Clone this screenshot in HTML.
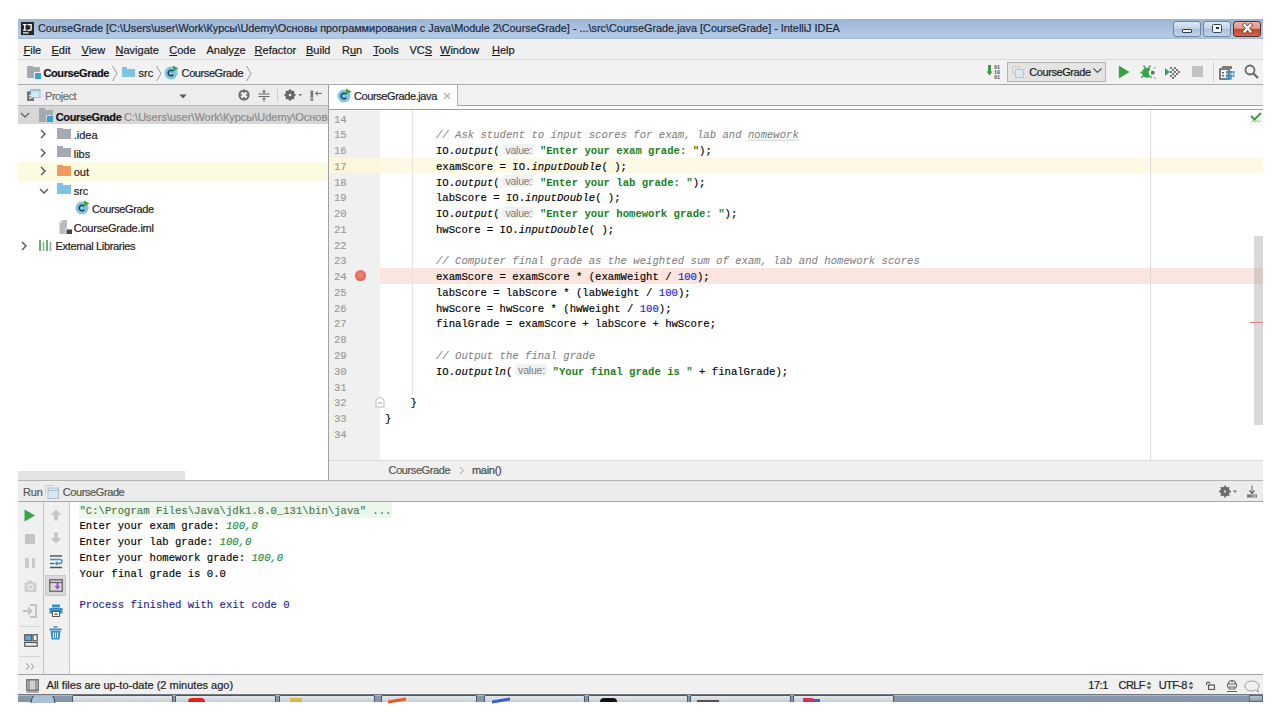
<!DOCTYPE html>
<html><head><meta charset="utf-8">
<style>
*{margin:0;padding:0;box-sizing:border-box}
html,body{width:1280px;height:720px;background:#fff;overflow:hidden;position:relative}
body{font-family:"Liberation Sans",sans-serif;font-size:11px;color:#1e1e1e}
.a{position:absolute}
.t{position:absolute;white-space:nowrap;line-height:11px;font-size:11px;-webkit-text-stroke:0.2px currentColor}
.mi{position:absolute;top:45px;white-space:nowrap;line-height:11px;font-size:11px;color:#1a1a1a;-webkit-text-stroke:0.2px currentColor}
.mi u{text-decoration:underline;text-underline-offset:1px}
.code{position:absolute;font-family:"Liberation Mono",monospace;font-size:10.625px;line-height:15.76px;white-space:pre;color:#000;-webkit-text-stroke:0.15px currentColor}
.cm{color:#808080;font-style:italic;-webkit-text-stroke:0.05px currentColor}
.st{color:#1a7f1a;font-weight:bold;-webkit-text-stroke:0}
.nu{color:#2323d6}
.it{font-style:italic}
.hint{display:inline-block;position:relative;width:40.25px;height:14px;vertical-align:top}
.hint i{position:absolute;left:2.25px;top:-0.5px;width:32.5px;height:11.7px;background:#f1f1f1;border-radius:3px;font-family:"Liberation Sans",sans-serif;font-style:normal;font-size:10.5px;color:#7b7b7b;line-height:13px;padding-left:3.5px;letter-spacing:-0.2px;-webkit-text-stroke:0}
.chev{position:absolute;width:6px;height:6px;border-right:1.5px solid #555;border-bottom:1.5px solid #555}
.fold{position:absolute;width:14px;height:10px}
.fold:before{content:"";position:absolute;left:0;top:-2px;width:6px;height:3px;border-radius:1px 1px 0 0;background:inherit}
</style></head><body>
<!-- ===== title bar ===== -->
<div class="a" style="left:18px;top:19px;width:1245px;height:20px;background:linear-gradient(#9eb0c5 0px,#9db7d7 1px,#9db7d7 2px,#b5cce7 18px,#a8bcd3 19px,#a8bcd3 20px)"></div><div class="a" style="left:18px;top:39px;width:1245px;height:1px;background:#eef3f9;z-index:1"></div>
<svg class="a" style="left:21px;top:22px" width="13" height="13"><rect width="13" height="13" fill="#262626"/><path d="M2 2 H5.5 V3.2 H4.4 V7.6 H5.5 V8.8 H2 V7.6 H3.1 V3.2 H2Z" fill="#fff"/><path d="M6.5 2 H10.8 V7 C10.8 8.5 10 9 8.5 9 H6.5 V7.7 H8.4 C9.2 7.7 9.4 7.4 9.4 6.8 V3.2 H6.5Z" fill="#fff"/><rect x="2" y="10.3" width="5.5" height="1.2" fill="#fff"/></svg>
<div class="t" style="left:38px;top:23.3px;font-size:10.85px;color:#1b2838">CourseGrade [C:\Users\user\Work\Курсы\Udemy\Основы программирования с Java\Module 2\CourseGrade] - ...\src\CourseGrade.java [CourseGrade] - IntelliJ IDEA</div>
<div class="a" style="left:1173px;top:21px;width:28px;height:16px;border:1px solid #6b84a2;border-radius:3px;background:linear-gradient(#dfe9f5 0%,#c3d4e8 45%,#a9bfd9 50%,#c5d6ea 100%)"></div>
<div class="a" style="left:1182px;top:29px;width:10px;height:4px;border:1px solid #2d3c50;background:#fff;border-radius:1px"></div>
<div class="a" style="left:1203px;top:21px;width:28px;height:16px;border:1px solid #6b84a2;border-radius:3px;background:linear-gradient(#dfe9f5 0%,#c3d4e8 45%,#a9bfd9 50%,#c5d6ea 100%)"></div>
<div class="a" style="left:1212px;top:24px;width:10px;height:8.5px;border:1.5px solid #3a4656;background:#f4f4f4;border-radius:1.5px"></div><div class="a" style="left:1215.5px;top:27px;width:3px;height:2px;background:#333"></div>
<div class="a" style="left:1233px;top:21px;width:28px;height:16px;border:1px solid #4e3430;border-radius:3px;background:linear-gradient(#eeb0a4 0%,#e39a88 45%,#c9452e 52%,#d2664c 100%)"></div>
<svg class="a" style="left:1241px;top:23px" width="13" height="11"><path d="M3.5 2 L9.5 8.5 M9.5 2 L3.5 8.5" stroke="#6a3a32" stroke-width="3.8" stroke-linecap="square"/><path d="M3.5 2 L9.5 8.5 M9.5 2 L3.5 8.5" stroke="#fff" stroke-width="2.3" stroke-linecap="square"/></svg>
<!-- ===== menu ===== -->
<div class="a" style="left:18px;top:39px;width:1245px;height:21px;background:#f0f0f0;border-bottom:1px solid #d9d9d9"></div>
<span class="mi" style="left:23.5px"><u>F</u>ile</span>
<span class="mi" style="left:51.5px"><u>E</u>dit</span>
<span class="mi" style="left:81.5px"><u>V</u>iew</span>
<span class="mi" style="left:115.5px"><u>N</u>avigate</span>
<span class="mi" style="left:169.3px"><u>C</u>ode</span>
<span class="mi" style="left:206.5px">Analy<u>z</u>e</span>
<span class="mi" style="left:254.6px"><u>R</u>efactor</span>
<span class="mi" style="left:306px"><u>B</u>uild</span>
<span class="mi" style="left:342px">R<u>u</u>n</span>
<span class="mi" style="left:373px"><u>T</u>ools</span>
<span class="mi" style="left:409.5px">VC<u>S</u></span>
<span class="mi" style="left:440px"><u>W</u>indow</span>
<span class="mi" style="left:492px"><u>H</u>elp</span>
<!-- ===== nav bar ===== -->
<div class="a" style="left:18px;top:60px;width:1245px;height:25px;background:#f2f2f2;border-bottom:1px solid #ababab"></div>

<!-- nav icons -->
<div class="a" style="left:27px;top:67px;width:13px;height:11px;background:#a3aab1"></div>
<div class="a" style="left:27px;top:65.5px;width:6px;height:2px;background:#a3aab1"></div>
<div class="a" style="left:34px;top:72px;width:7px;height:7px;background:#f2f2f2"></div>
<div class="a" style="left:35px;top:73px;width:6px;height:6px;background:#3aa3d6"></div>
<div class="t" style="left:43.4px;top:68.2px;font-weight:bold;letter-spacing:-0.37px;color:#111">CourseGrade</div>
<svg class="a" style="left:111px;top:65px" width="8" height="17"><path d="M1.5 1 L6 8.5 L1.5 16" fill="none" stroke="#9a9a9a" stroke-width="1"/></svg>
<div class="a" style="left:122px;top:68.5px;width:12.5px;height:8.5px;background:#7ec3e2"></div>
<div class="a" style="left:122px;top:67px;width:5px;height:2px;background:#7ec3e2"></div>
<div class="t" style="left:138.5px;top:68.2px;color:#222">src</div>
<svg class="a" style="left:155px;top:65px" width="8" height="17"><path d="M1.5 1 L6 8.5 L1.5 16" fill="none" stroke="#9a9a9a" stroke-width="1"/></svg>
<svg class="a" style="left:164px;top:65px" width="15" height="15"><circle cx="7" cy="8" r="6.5" fill="#7fc4e3"/><path d="M9.2 6.3 A2.8 2.8 0 1 0 9.2 9.7" fill="none" stroke="#1f3f5a" stroke-width="1.5"/><path d="M9 0.5 L14.5 3.5 L9 6.5Z" fill="#3fa33f"/></svg>
<div class="t" style="left:181.6px;top:68.2px;letter-spacing:-0.41px;color:#222">CourseGrade</div>
<svg class="a" style="left:245px;top:65px" width="8" height="17"><path d="M1.5 1 L6 8.5 L1.5 16" fill="none" stroke="#9a9a9a" stroke-width="1"/></svg>
<!-- right toolbar -->
<svg class="a" style="left:986px;top:64px" width="16" height="16"><path d="M3.5 1 V8" stroke="#3c9b4a" stroke-width="3"/><path d="M0.5 7.5 H6.5 L3.5 11.5Z" fill="#3c9b4a"/><text x="8" y="5" font-family="Liberation Mono" font-size="5.2" font-weight="bold" fill="#555">01</text><text x="8" y="10" font-family="Liberation Mono" font-size="5.2" font-weight="bold" fill="#555">10</text><text x="8" y="15" font-family="Liberation Mono" font-size="5.2" font-weight="bold" fill="#555">01</text></svg>
<div class="a" style="left:1007px;top:62px;width:99px;height:20px;border:1px solid #b4b4b4;background:#e4e4e4"></div>
<div class="a" style="left:1012px;top:65.5px;width:8px;height:8px;border:1px solid #c8cdd2;border-radius:1px"></div>
<div class="a" style="left:1015px;top:69px;width:9px;height:8.5px;border:1px solid #b9c6d0;background:#dbe5ee"></div>
<div class="t" style="left:1029.2px;top:66.8px;letter-spacing:-0.41px;color:#1a1a1a">CourseGrade</div>
<svg class="a" style="left:1093px;top:68px" width="9" height="6"><path d="M0.5 0.5 L4.5 4.5 L8.5 0.5" fill="none" stroke="#555" stroke-width="1.2"/></svg>
<svg class="a" style="left:1118px;top:65px" width="13" height="14"><path d="M0.8 0.5 L11.5 7 L0.8 13.5Z" fill="#36a546"/></svg>
<svg class="a" style="left:1140px;top:64px" width="17" height="16"><path d="M3.5 1.5 L5.5 4 M10.5 1.5 L8.5 4 M0.3 8.5 H2.5 M1.2 13.8 L3.5 11.8 M11.8 13.8 L9.5 11.8" stroke="#3f9f4a" stroke-width="1.4"/><circle cx="7" cy="8.7" r="5" fill="#36a546"/><circle cx="12.3" cy="8.7" r="3.6" fill="#f2f2f2"/><path d="M11 5.8 A3.2 3.2 0 0 1 11 11.6 A2.6 3.3 0 0 0 11 5.8Z" fill="#666"/><circle cx="12.8" cy="8.7" r="1.9" fill="#6b6b6b"/><path d="M14 4.5 L15.5 3 M14 13 L15.5 14.5" stroke="#777" stroke-width="1"/></svg>
<svg class="a" style="left:1164px;top:64px" width="17" height="16"><path d="M1 4 L6 8 L1 12Z" fill="#36a546"/><g fill="#777"><rect x="6" y="3" width="2" height="2"/><rect x="10" y="3" width="2" height="2"/><rect x="8" y="5" width="2" height="2"/><rect x="12" y="5" width="2" height="2"/><rect x="6" y="7" width="2" height="2"/><rect x="10" y="7" width="2" height="2"/><rect x="14" y="7" width="2" height="2"/><rect x="8" y="9" width="2" height="2"/><rect x="12" y="9" width="2" height="2"/><rect x="6" y="11" width="2" height="2"/><rect x="10" y="11" width="2" height="2"/><rect x="8" y="13" width="2" height="2"/></g></svg>
<div class="a" style="left:1192px;top:66px;width:11px;height:11px;background:#c2c2c2"></div>
<div class="a" style="left:1213px;top:62px;width:1px;height:20px;background:#d0d0d0"></div>
<svg class="a" style="left:1219px;top:64px" width="16" height="16"><path d="M3 3 H12 V5 M1 5 H10 V15 H1Z" fill="none" stroke="#555" stroke-width="1.5"/><g fill="#3d8fc6"><rect x="7" y="7" width="2.5" height="2.5"/><rect x="10.5" y="7" width="2.5" height="2.5"/><rect x="7" y="10.5" width="2.5" height="2.5"/><rect x="10.5" y="10.5" width="2.5" height="2.5"/><rect x="13.5" y="7" width="2" height="2.5"/><rect x="13.5" y="10.5" width="2" height="2.5"/><rect x="7" y="13.5" width="2.5" height="2"/><rect x="10.5" y="13.5" width="2.5" height="2"/></g><g fill="#666"><rect x="3" y="8" width="2" height="1.5"/><rect x="3" y="11" width="2" height="1.5"/></g></svg>
<svg class="a" style="left:1244px;top:64px" width="16" height="16"><circle cx="6" cy="6" r="4.5" fill="none" stroke="#666" stroke-width="1.8"/><path d="M9.5 9.5 L14 14" stroke="#666" stroke-width="2.2"/></svg>

<!-- ===== project panel ===== -->
<div class="a" style="left:18px;top:85px;width:311px;height:21px;background:#ededed;border-bottom:1px solid #b9b9b9"></div>
<svg class="a" style="left:27px;top:89px" width="14" height="13"><rect x="0" y="2.5" width="7" height="9.5" fill="#767676"/><rect x="3.5" y="0.5" width="9.5" height="8" fill="#d4e9f7" stroke="#9cc0d8" stroke-width="1"/><rect x="3.5" y="0.5" width="9.5" height="1.8" fill="#9cc0d8"/><rect x="0" y="2.5" width="3.5" height="9.5" fill="#767676"/><rect x="2" y="6" width="2.5" height="1.2" fill="#eee"/><rect x="2" y="8.5" width="2.5" height="1.2" fill="#eee"/></svg>
<div class="t" style="left:45px;top:91px;color:#6e6e6e;letter-spacing:-0.45px">Project</div>
<svg class="a" style="left:179px;top:94px" width="8" height="5"><path d="M0.5 0.5 H7.5 L4 4.5Z" fill="#555"/></svg>
<svg class="a" style="left:238px;top:89px" width="12" height="12"><circle cx="6" cy="6" r="4.6" fill="none" stroke="#6a6a6a" stroke-width="2"/><path d="M6 1.5 V4 M6 8 V10.5 M1.5 6 H4 M8 6 H10.5" stroke="#6a6a6a" stroke-width="1.4"/></svg>
<svg class="a" style="left:258px;top:89px" width="12" height="13"><path d="M0.5 5 H11.5 M0.5 7.5 H11.5" stroke="#6a6a6a" stroke-width="1.1"/><path d="M6 0.5 V3.5 M6 9 V12.5" stroke="#6a6a6a" stroke-width="1.1"/><path d="M4 2.2 L6 4.3 L8 2.2Z M4 10.3 L6 8.2 L8 10.3Z" fill="#6a6a6a"/></svg>
<div class="a" style="left:277px;top:89px;width:1px;height:13px;background:#cfcfcf"></div>
<svg class="a" style="left:284px;top:89px" width="19" height="12"><circle cx="6" cy="6" r="3.6" fill="none" stroke="#666" stroke-width="2.4"/><path d="M6 0.3 V11.7 M0.3 6 H11.7 M2 2 L10 10 M10 2 L2 10" stroke="#666" stroke-width="1.7"/><circle cx="6" cy="6" r="1.3" fill="#ededed"/><path d="M14.5 5 H18 L16.25 7.5Z" fill="#777"/></svg>
<svg class="a" style="left:310px;top:90px" width="13" height="12"><rect x="0.5" y="0.5" width="2.7" height="10.5" fill="#777"/><rect x="1" y="7" width="1.7" height="3" fill="#aaa"/><path d="M5.5 3.4 H12 M5.5 3.4 L7.8 1.4 M5.5 3.4 L7.8 5.4" stroke="#666" stroke-width="1" fill="none"/></svg>
<div class="a" style="left:18px;top:106px;width:311px;height:365px;background:#fff"></div>
<!-- selected row -->
<div class="a" style="left:18px;top:106px;width:311px;height:18.3px;background:#d7d7d7"></div>
<!-- out row highlight -->
<div class="a" style="left:18px;top:161.5px;width:311px;height:19px;background:#fbfbe2"></div>
<!-- rows -->
<svg class="a" style="left:20px;top:112px" width="10" height="7"><path d="M1 1 L5 5 L9 1" fill="none" stroke="#666" stroke-width="1.4"/></svg>
<div class="a" style="left:39px;top:109.5px;width:14px;height:12px;background:#a3aab1"></div>
<div class="a" style="left:39px;top:108px;width:6px;height:2px;background:#a3aab1"></div>
<div class="a" style="left:46px;top:115px;width:8px;height:8px;background:#d5d5d5"></div>
<div class="a" style="left:47px;top:116px;width:6px;height:6px;background:#3aa3d6"></div>
<div class="t" style="left:55.8px;top:112px;font-weight:bold;letter-spacing:-0.37px;color:#111;width:273px;overflow:hidden">CourseGrade <span style="font-weight:normal;color:#8a8a8a;letter-spacing:0px">C:\Users\user\Work\Курсы\Udemy\Основы программирования</span></div>

<svg class="a" style="left:40px;top:129px" width="7" height="10"><path d="M1 1 L5 5 L1 9" fill="none" stroke="#555" stroke-width="1.4"/></svg>
<div class="a" style="left:57px;top:129px;width:13.5px;height:9.5px;background:#a3aab1"></div>
<div class="a" style="left:57px;top:127.5px;width:5.5px;height:2px;background:#a3aab1"></div>
<div class="t" style="left:73.7px;top:130px;color:#222">.idea</div>

<svg class="a" style="left:40px;top:148px" width="7" height="10"><path d="M1 1 L5 5 L1 9" fill="none" stroke="#555" stroke-width="1.4"/></svg>
<div class="a" style="left:57px;top:147.5px;width:13.5px;height:9.5px;background:#a3aab1"></div>
<div class="a" style="left:57px;top:146px;width:5.5px;height:2px;background:#a3aab1"></div>
<div class="t" style="left:73.7px;top:148.5px;color:#222">libs</div>

<svg class="a" style="left:40px;top:166px" width="7" height="10"><path d="M1 1 L5 5 L1 9" fill="none" stroke="#555" stroke-width="1.4"/></svg>
<div class="a" style="left:57px;top:166px;width:13.5px;height:9.5px;background:#f39a63"></div>
<div class="a" style="left:57px;top:164.5px;width:5.5px;height:2px;background:#f39a63"></div>
<div class="t" style="left:73.7px;top:167px;color:#222">out</div>

<svg class="a" style="left:38.5px;top:188px" width="10" height="7"><path d="M1 1 L5 5 L9 1" fill="none" stroke="#555" stroke-width="1.4"/></svg>
<div class="a" style="left:57px;top:184.5px;width:13.5px;height:9.5px;background:#7ec3e2"></div>
<div class="a" style="left:57px;top:183px;width:5.5px;height:2px;background:#7ec3e2"></div>
<div class="t" style="left:73.7px;top:185.5px;color:#222">src</div>

<svg class="a" style="left:75px;top:200px" width="15" height="15"><circle cx="7" cy="8" r="6.5" fill="#7fc4e3"/><path d="M9.2 6.3 A2.8 2.8 0 1 0 9.2 9.7" fill="none" stroke="#1f3f5a" stroke-width="1.5"/><path d="M9 0.5 L14.5 3.5 L9 6.5Z" fill="#3fa33f"/></svg>
<div class="t" style="left:91.9px;top:204px;letter-spacing:-0.38px;color:#222">CourseGrade</div>

<svg class="a" style="left:58.5px;top:220px" width="14" height="14"><path d="M0.5 2 L3 0 H8 V14 H0.5Z" fill="#b8bcc0"/><path d="M3 0 V2.5 H0.5" fill="none" stroke="#eee" stroke-width="0.8"/><rect x="6.5" y="8.5" width="7" height="5.5" fill="#f5f5f5"/><rect x="7.5" y="9.5" width="5.5" height="4.5" fill="#444"/></svg>
<div class="t" style="left:73.7px;top:222.5px;letter-spacing:-0.2px;color:#222">CourseGrade.iml</div>

<svg class="a" style="left:21px;top:241px" width="7" height="10"><path d="M1 1 L5 5 L1 9" fill="none" stroke="#555" stroke-width="1.4"/></svg>
<svg class="a" style="left:38.5px;top:238.5px" width="14" height="13"><path d="M1 1 V12 M4.5 3 V12 M8 1 V12 M11.5 3 V12" stroke="#8aa" stroke-width="1.5"/><path d="M1 1 V12" stroke="#5aab5a" stroke-width="1.5"/><path d="M8 1 V12" stroke="#5aab5a" stroke-width="1.5"/></svg>
<div class="t" style="left:55.6px;top:241px;letter-spacing:-0.33px;color:#222">External Libraries</div>
<!-- project h scrollbar -->
<div class="a" style="left:18px;top:471px;width:167px;height:10px;background:#e4e4e4"></div>

<!-- ===== editor ===== -->
<div class="a" style="left:328px;top:84px;width:1px;height:397px;background:#a0a0a0"></div>
<div class="a" style="left:329px;top:85px;width:934px;height:25px;background:#f1f1f1;border-bottom:1px solid #9c9c9c"></div>
<div class="a" style="left:457px;top:105px;width:806px;height:1px;background:#a8a8a8"></div>
<div class="a" style="left:329px;top:106px;width:934px;height:3px;background:#fff"></div>
<div class="a" style="left:329px;top:85px;width:128px;height:21px;background:#fff"></div>
<div class="a" style="left:457px;top:85px;width:1px;height:21px;background:#b0b0b0"></div>
<svg class="a" style="left:336.5px;top:87.5px" width="15" height="15"><circle cx="7" cy="8" r="6.5" fill="#7fc4e3"/><path d="M9.2 6.3 A2.8 2.8 0 1 0 9.2 9.7" fill="none" stroke="#1f3f5a" stroke-width="1.5"/><path d="M9 0.5 L14.5 3.5 L9 6.5Z" fill="#3fa33f"/></svg>
<div class="t" style="left:353.9px;top:90.5px;letter-spacing:-0.39px;color:#222">CourseGrade.java</div>
<svg class="a" style="left:443px;top:92px" width="8" height="8"><path d="M1 1 L7 7 M7 1 L1 7" stroke="#b0b0b0" stroke-width="1.1"/></svg>
<div class="a" style="left:329px;top:110px;width:934px;height:349.5px;background:#fff"></div>
<!-- gutter -->
<div class="a" style="left:329px;top:110px;width:50.5px;height:349.5px;background:#f0f0f0"></div>
<!-- current line 17 -->
<div class="a" style="left:329px;top:157.5px;width:934px;height:15.76px;background:#fdf9e5"></div>
<div class="a" style="left:329px;top:157.5px;width:50.5px;height:15.76px;background:#fcf6dc"></div>
<!-- breakpoint line 24 -->
<div class="a" style="left:379.5px;top:268px;width:883.5px;height:15.76px;background:#fae5df"></div>
<div class="a" style="left:355px;top:270.2px;width:11px;height:11px;border-radius:50%;background:radial-gradient(circle at 50% 45%,#ee9080 0,#e56c58 55%,#d0503c 100%)"></div>
<!-- indent guide -->
<div class="a" style="left:412px;top:110px;width:1px;height:285px;background:#e4e4e4"></div>
<!-- right margin -->
<div class="a" style="left:1150px;top:110px;width:1px;height:349.5px;background:#dcdcdc"></div>
<!-- line numbers -->
<div class="code" style="left:334px;top:112.5px;color:#9a9a9a">14
15
16
17
18
19
20
21
22
23
24
25
26
27
28
29
30
31
32
33
34</div>
<!-- fold marker -->
<svg class="a" style="left:375px;top:396px" width="10" height="12"><path d="M1 4 L5 1 L9 4 V11 H1Z" fill="#fff" stroke="#bbb" stroke-width="1"/><path d="M3 7 H7" stroke="#999" stroke-width="1"/></svg>
<!-- code -->
<div class="code" style="left:385px;top:112.5px">
        <span class="cm">// Ask student to input scores for exam, lab and nomework</span>
        IO.<span class="it">output</span>(<span class="hint"><i>value:</i></span><span class="st">"Enter your exam grade: "</span>);
        examScore = IO.<span class="it">inputDouble</span>( );
        IO.<span class="it">output</span>(<span class="hint"><i>value:</i></span><span class="st">"Enter your lab grade: "</span>);
        labScore = IO.<span class="it">inputDouble</span>( );
        IO.<span class="it">output</span>(<span class="hint"><i>value:</i></span><span class="st">"Enter your homework grade: "</span>);
        hwScore = IO.<span class="it">inputDouble</span>( );

        <span class="cm">// Computer final grade as the weighted sum of exam, lab and homework scores</span>
        examScore = examScore * (examWeight / <span class="nu">100</span>);
        labScore = labScore * (labWeight / <span class="nu">100</span>);
        hwScore = hwScore * (hwWeight / <span class="nu">100</span>);
        finalGrade = examScore + labScore + hwScore;

        <span class="cm">// Output the final grade</span>
        IO.<span class="it">outputln</span>(<span class="hint"><i>value:</i></span><span class="st">"Your final grade is "</span> + finalGrade);

    }
}
</div>
<!-- typo underline -->
<svg class="a" style="left:748px;top:139px" width="51" height="3"><path d="M0 2 L2 0.5 L4 2 L6 0.5 L8 2 L10 0.5 L12 2 L14 0.5 L16 2 L18 0.5 L20 2 L22 0.5 L24 2 L26 0.5 L28 2 L30 0.5 L32 2 L34 0.5 L36 2 L38 0.5 L40 2 L42 0.5 L44 2 L46 0.5 L48 2 L50 0.5 L52 2" fill="none" stroke="#b8c8b8" stroke-width="0.8"/></svg>
<!-- check mark -->
<svg class="a" style="left:1250px;top:112px" width="12" height="12"><path d="M1 4 L4.5 7.5 L11 1" fill="none" stroke="#3f9b3f" stroke-width="2"/><path d="M1 10 L3 8.5 L5 10 L7 8.5 L9 10 L11 8.5" fill="none" stroke="#6ab06a" stroke-width="0.8"/></svg>
<!-- scrollbar -->
<div class="a" style="left:1254px;top:236px;width:9px;height:189px;background:rgba(160,160,160,0.4)"></div>
<div class="a" style="left:1250px;top:322px;width:13px;height:1px;background:#e08080"></div>
<!-- editor breadcrumbs -->
<div class="a" style="left:329px;top:459.5px;width:934px;height:21.5px;background:#f0f0f0;border-top:1px solid #dcdcdc"></div>
<div class="t" style="left:388.6px;top:465px;letter-spacing:-0.41px;color:#555">CourseGrade</div>
<svg class="a" style="left:459px;top:466px" width="6" height="9"><path d="M1 1 L4.5 4.5 L1 8" fill="none" stroke="#999" stroke-width="1"/></svg>
<div class="t" style="left:472px;top:465px;letter-spacing:-0.3px;color:#444">main()</div>

<!-- ===== run panel ===== -->
<div class="a" style="left:18px;top:480px;width:1245px;height:22px;background:#ececec;border-top:1px solid #b4b4b4;border-bottom:1px solid #a8a8a8"></div>
<div class="t" style="left:23px;top:487px;letter-spacing:-0.2px;color:#555">Run</div>
<svg class="a" style="left:45px;top:485px" width="14" height="14"><path d="M0.5 9 V0.5 H9" fill="none" stroke="#c9ced3" stroke-width="1"/><rect x="3" y="3" width="10.5" height="10.5" fill="#d9e6f0" stroke="#aebfcc" stroke-width="1"/><path d="M3 5.5 H13.5" stroke="#aebfcc" stroke-width="1"/></svg>
<div class="t" style="left:62.8px;top:487px;letter-spacing:-0.41px;color:#555">CourseGrade</div>
<svg class="a" style="left:1219px;top:485px" width="20" height="13"><circle cx="6" cy="6.5" r="3.6" fill="none" stroke="#6a6a6a" stroke-width="2.4"/><path d="M6 0.5 V12.5 M0 6.5 H12 M1.8 2.3 L10.2 10.7 M10.2 2.3 L1.8 10.7" stroke="#6a6a6a" stroke-width="1.6"/><circle cx="6" cy="6.5" r="1.1" fill="#ececec"/><path d="M14 5.5 H18 L16 8Z" fill="#777"/></svg>
<svg class="a" style="left:1246px;top:485px" width="12" height="13"><path d="M6 0.5 V8" stroke="#666" stroke-width="1"/><path d="M3.5 5.5 L6 8.5 L8.5 5.5" fill="none" stroke="#666" stroke-width="1.2"/><rect x="1" y="9.5" width="10" height="3" fill="#777"/><rect x="6" y="10.5" width="4" height="1" fill="#ddd"/></svg>
<!-- run content -->
<div class="a" style="left:18px;top:502px;width:1245px;height:172.5px;background:#fff"></div>
<div class="a" style="left:18px;top:502px;width:25px;height:172.5px;background:#f0f0f0"></div>
<div class="a" style="left:42.5px;top:502px;width:1px;height:172.5px;background:#c0c0c0"></div>
<div class="a" style="left:43.5px;top:502px;width:25px;height:172.5px;background:#f0f0f0"></div>
<div class="a" style="left:68.5px;top:502px;width:1px;height:172.5px;background:#c8c8c8"></div>
<!-- col1 icons -->
<svg class="a" style="left:24px;top:508.5px" width="12" height="13"><path d="M0.5 0.5 L11 6.5 L0.5 12.5Z" fill="#36a546"/></svg>
<div class="a" style="left:25px;top:533.5px;width:10px;height:10px;background:#c4c4c4"></div>
<div class="a" style="left:25px;top:557.5px;width:3.5px;height:10.5px;background:#c9c9c9"></div>
<div class="a" style="left:31.5px;top:557.5px;width:3.5px;height:10.5px;background:#c9c9c9"></div>
<svg class="a" style="left:23.5px;top:580px" width="13" height="13"><rect x="0.5" y="2.5" width="12" height="9.5" rx="1" fill="#cfcfcf"/><rect x="3.5" y="0.5" width="5" height="3" fill="#cfcfcf"/><circle cx="6.5" cy="7" r="3" fill="#f0f0f0"/><circle cx="6.5" cy="7" r="1.8" fill="#cfcfcf"/></svg>
<svg class="a" style="left:23px;top:604px" width="14" height="14"><path d="M7 1 H13 V13 H7" fill="none" stroke="#c4c4c4" stroke-width="2"/><path d="M0 7 H8" stroke="#c4c4c4" stroke-width="2"/><path d="M5 3.5 L8.5 7 L5 10.5" fill="none" stroke="#c4c4c4" stroke-width="2"/></svg>
<div class="a" style="left:20px;top:626px;width:21px;height:1px;background:#d5d5d5"></div>
<svg class="a" style="left:23.5px;top:633.5px" width="14" height="13"><rect x="0.75" y="0.75" width="7" height="6" fill="#5aa6d8" stroke="#555" stroke-width="1.2"/><rect x="9" y="0.75" width="4.25" height="6" fill="none" stroke="#555" stroke-width="1.2"/><rect x="0.75" y="8.5" width="12.5" height="3.75" fill="none" stroke="#555" stroke-width="1.2"/></svg>
<div class="a" style="left:20px;top:656px;width:21px;height:1px;background:#d5d5d5"></div>
<svg class="a" style="left:26px;top:663px" width="9" height="7"><path d="M0.5 0.5 L3 3.5 L0.5 6.5 M5 0.5 L7.5 3.5 L5 6.5" fill="none" stroke="#888" stroke-width="1"/></svg>
<!-- col2 icons -->
<svg class="a" style="left:49.5px;top:508.5px" width="12" height="12"><path d="M6 0.5 L11.5 6 H8 V11.5 H4 V6 H0.5Z" fill="#c6c6c6"/></svg>
<svg class="a" style="left:49.5px;top:532px" width="12" height="12"><path d="M6 11.5 L11.5 6 H8 V0.5 H4 V6 H0.5Z" fill="#c6c6c6"/></svg>
<svg class="a" style="left:48.5px;top:555px" width="14" height="14"><path d="M1 1 H13 M1 12.5 H13" stroke="#555" stroke-width="1.3"/><path d="M1 4.5 H11 A2 2 0 0 1 11 8.5 H7 M8.5 7 L6.5 8.5 L8.5 10" fill="none" stroke="#3d8fc6" stroke-width="1.3"/><path d="M1 8.5 H5" stroke="#555" stroke-width="1.3"/></svg>
<div class="a" style="left:45px;top:575px;width:21px;height:21px;background:#d9d9d9;border:1px solid #c8c8c8"></div>
<svg class="a" style="left:48.5px;top:579px" width="14" height="13"><rect x="0.75" y="0.75" width="12.5" height="11.5" fill="none" stroke="#666" stroke-width="1.3"/><path d="M0.75 3.5 H13" stroke="#666" stroke-width="1.3"/><path d="M8.5 3.5 V8" stroke="#9a4fcf" stroke-width="2"/><path d="M5.5 7 H11.5 L8.5 10.5Z" fill="#9a4fcf"/></svg>
<svg class="a" style="left:48.5px;top:603.5px" width="14" height="13"><rect x="3" y="0.5" width="8" height="3" fill="#3d8fc6"/><rect x="0.5" y="4" width="13" height="5.5" fill="#3d8fc6"/><rect x="3.5" y="7.5" width="7" height="5" fill="#fff" stroke="#555" stroke-width="1"/><rect x="5.5" y="9.5" width="3" height="1.5" fill="#555"/></svg>
<svg class="a" style="left:49px;top:626px" width="13" height="14"><path d="M4.5 1 H8.5" stroke="#3d8fc6" stroke-width="1.5"/><rect x="0.5" y="2.5" width="12" height="2" fill="#3d8fc6"/><path d="M1.5 5 H11.5 L10.5 13.5 H2.5Z" fill="#3d8fc6"/><path d="M4.5 6.5 V12 M6.5 6.5 V12 M8.5 6.5 V12" stroke="#fff" stroke-width="0.9"/></svg>
<!-- console -->
<div class="a" style="left:79px;top:502px;width:313px;height:15.76px;background:#ebf7eb"></div>
<div class="code" style="left:79.5px;top:503.5px;color:#000"><span style="color:#4f744f">"C:\Program Files\Java\jdk1.8.0_131\bin\java" ...</span>
Enter your exam grade: <span style="color:#2b8a3e;font-style:italic">100,0</span>
Enter your lab grade: <span style="color:#2b8a3e;font-style:italic">100,0</span>
Enter your homework grade: <span style="color:#2b8a3e;font-style:italic">100,0</span>
Your final grade is 0.0

<span style="color:#1f1f8f">Process finished with exit code 0</span></div>
<!-- ===== status bar ===== -->
<div class="a" style="left:18px;top:674px;width:1245px;height:20px;background:#f0f0f0;border-top:1px solid #a2a2a2"></div>
<svg class="a" style="left:26px;top:678.5px" width="13" height="14"><rect x="0.75" y="0.75" width="11.5" height="10.5" fill="#d0d0d0" stroke="#6a6a6a" stroke-width="1.3"/><path d="M3 1 V11 M10 1 V11" stroke="#6a6a6a" stroke-width="1"/><path d="M0.5 13 H12.5" stroke="#6a6a6a" stroke-width="1"/></svg>
<div class="t" style="left:46.6px;top:679.7px;color:#1e1e1e">All files are up-to-date (2 minutes ago)</div>
<!-- taskbar -->
<div class="a" style="left:18px;top:694px;width:1245px;height:8px;background:linear-gradient(#75797f 0px,#75797f 1px,#a9b9cc 1px,#a9b9cc 2px,#8598ae 2px,#8195ab 8px)"></div>

<!-- status right -->
<div class="t" style="left:1088.2px;top:679.7px;letter-spacing:-0.4px;color:#222">17:1</div>
<div class="t" style="left:1118.6px;top:679.7px;letter-spacing:-0.6px;color:#222">CRLF</div>
<svg class="a" style="left:1145.5px;top:681px" width="6" height="9"><path d="M0.5 3.5 L3 0.5 L5.5 3.5Z M0.5 5.5 L3 8.5 L5.5 5.5Z" fill="#555"/></svg>
<div class="t" style="left:1158.7px;top:679.7px;letter-spacing:-0.6px;color:#222">UTF-8</div>
<svg class="a" style="left:1188px;top:681px" width="6" height="9"><path d="M0.5 3.5 L3 0.5 L5.5 3.5Z M0.5 5.5 L3 8.5 L5.5 5.5Z" fill="#555"/></svg>
<svg class="a" style="left:1205px;top:681px" width="10" height="9"><path d="M1.5 4 V2.5 A1.8 1.8 0 0 1 5 2.5" fill="none" stroke="#555" stroke-width="1.1"/><rect x="3.5" y="4" width="6" height="4.5" fill="none" stroke="#555" stroke-width="1.2"/></svg>
<svg class="a" style="left:1225.5px;top:678.5px" width="12" height="13"><path d="M2.5 5 A3.5 3.5 0 0 1 9.5 5" fill="none" stroke="#666" stroke-width="1.2"/><rect x="1.5" y="5" width="9" height="3" fill="none" stroke="#666" stroke-width="1"/><path d="M3 8 V10 H9 V8 M1 12.5 H11" fill="none" stroke="#666" stroke-width="1.1"/><path d="M6 1.5 V3.5" stroke="#666" stroke-width="1"/></svg>
<svg class="a" style="left:1244px;top:679.5px" width="16" height="13"><path d="M7.5 1 C3.5 1 1 3.2 1 6 C1 8.8 3.5 11 7.5 11 C9 11 10.5 10.6 11.5 10 L14.5 12 L13.5 9 C14.5 8 15 7 15 6 C15 3.2 12 1 7.5 1Z" fill="none" stroke="#9a9a9a" stroke-width="1"/></svg>
<!-- taskbar buttons -->
<div class="a" style="left:72px;top:695px;width:100.5px;height:7px;border:1px solid #4a5868;border-bottom:none;border-radius:2px 2px 0 0;background:linear-gradient(#e4e9ee,#c4ccd5)"></div>
<div class="a" style="left:175px;top:695px;width:100.5px;height:7px;border:1px solid #4a5868;border-bottom:none;border-radius:2px 2px 0 0;background:linear-gradient(#e4e9ee,#c4ccd5)"></div>
<div class="a" style="left:278.75px;top:695px;width:95.75px;height:7px;border:1px solid #4a5868;border-bottom:none;border-radius:2px 2px 0 0;background:linear-gradient(#e4e9ee,#c4ccd5)"></div>
<div class="a" style="left:381px;top:695px;width:96px;height:7px;border:1px solid #4a5868;border-bottom:none;border-radius:2px 2px 0 0;background:linear-gradient(#e4e9ee,#c4ccd5)"></div>
<div class="a" style="left:483.75px;top:695px;width:101.25px;height:7px;border:1px solid #4a5868;border-bottom:none;border-radius:2px 2px 0 0;background:linear-gradient(#e4e9ee,#c4ccd5)"></div>
<div class="a" style="left:587.5px;top:695px;width:100.0px;height:7px;border:1px solid #4a5868;border-bottom:none;border-radius:2px 2px 0 0;background:linear-gradient(#e4e9ee,#c4ccd5)"></div>
<div class="a" style="left:690px;top:695px;width:101px;height:7px;border:1px solid #4a5868;border-bottom:none;border-radius:2px 2px 0 0;background:linear-gradient(#e4e9ee,#c4ccd5)"></div>
<div class="a" style="left:793px;top:695px;width:101px;height:7px;border:1px solid #4a5868;border-bottom:none;border-radius:2px 2px 0 0;background:linear-gradient(#e4e9ee,#c4ccd5)"></div>
<svg class="a" style="left:30px;top:695.5px" width="26" height="7"><path d="M1 7 A12 12 0 0 1 25 7" fill="#a9c0d6" stroke="#2e4660" stroke-width="1"/></svg>
<div class="a" style="left:188px;top:697.5px;width:17px;height:4.5px;border-radius:9px 9px 0 0;background:#e02020"></div>
<div class="a" style="left:290px;top:698px;width:12px;height:4px;background:#d8b850"></div>
<div class="a" style="left:388px;top:699px;width:18px;height:3px;background:#e85a28;transform:skewY(-10deg)"></div>
<div class="a" style="left:492px;top:699px;width:18px;height:3px;background:#3a5fc8;transform:skewY(-10deg)"></div>
<div class="a" style="left:600px;top:697.5px;width:17px;height:4.5px;border-radius:9px 9px 0 0;background:#111"></div>
<div class="a" style="left:697px;top:700px;width:22px;height:2px;background:#555"></div>
<div class="a" style="left:803px;top:698px;width:10px;height:4px;background:#d83050"></div><div class="a" style="left:813px;top:699px;width:7px;height:3px;background:#4060c0"></div>
<div class="a" style="left:1249px;top:695px;width:14px;height:7px;background:linear-gradient(#b8c4d0,#8e9cab);border:1px solid #5b6b7d"></div>
</body></html>
